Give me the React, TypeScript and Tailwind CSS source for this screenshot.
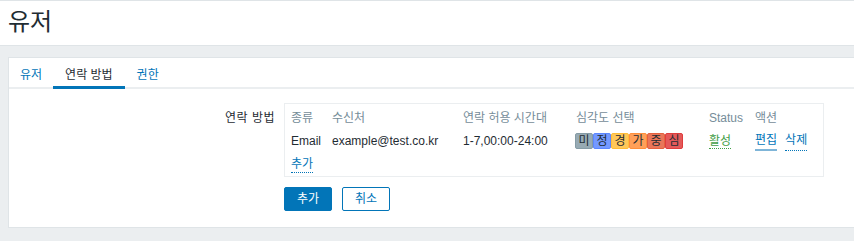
const font = { fontFamily: '"Liberation Sans", Arial, "Noto Sans CJK KR", sans-serif' };

const severities = [
  { label: "미", cls: "bg-[#97aab3] border-[#859ba5]" },
  { label: "정", cls: "bg-[#7499ff] border-[#5b87ff]" },
  { label: "경", cls: "bg-[#ffc859] border-[#ffbd38]" },
  { label: "가", cls: "bg-[#ffa059] border-[#ff8f3b]" },
  { label: "중", cls: "bg-[#e97659] border-[#e5603e]" },
  { label: "심", cls: "bg-[#e45959] border-[#df3d3d]" },
];

const App = () => {
  return (
    <div style={font} className="w-[854px] h-[241px] bg-[#ebeef0] text-[12px] text-[#1f2c33] overflow-hidden">
      <div className="h-[46px] bg-white border-t border-b border-[#dfe4e7] flex items-center pl-[8px]">
        <h1 className="text-[24px] leading-none font-normal text-[#1f2c33] -mt-[2px]">유저</h1>
      </div>

      <div className="mt-[11px] ml-[8px] w-[900px] h-[171px] bg-white border border-[#dfe4e7]">
        <ul className="flex h-[31px] border-b-2 border-[#ebeef0]">
          <li className="px-[11px] pt-[8px] text-[#0275b8]">유저</li>
          <li className="px-[12px] pt-[8px] text-[#1f2c33] border-b-[3px] border-[#0275b8] h-[31px]">연락 방법</li>
          <li className="px-[12px] pt-[8px] text-[#0275b8]">권한</li>
        </ul>

        <div className="flex pt-[14px]">
          <div className="w-[266px] text-right pt-[6px] tracking-[0.5px]">연락 방법</div>
          <div className="ml-[9px]">
            <div className="w-[540px] h-[74px] border border-[#ebeef0] px-[6px] pt-[3px]">
              <div className="flex h-[21px] items-center text-[#768d99]">
                <span className="w-[41px]">종류</span>
                <span className="w-[131px]">수신처</span>
                <span className="w-[113px]">연락 허용 시간대</span>
                <span className="w-[133px]">심각도 선택</span>
                <span className="w-[46px]">Status</span>
                <span>액션</span>
              </div>
              <div className="flex h-[25px] items-center">
                <span className="w-[41px]">Email</span>
                <span className="w-[131px]">example@test.co.kr</span>
                <span className="w-[113px]">1-7,00:00-24:00</span>
                <span className="w-[133px] flex -ml-[1px]">
                  {severities.map((s) => (
                    <span
                      key={s.label}
                      className={`w-[18px] h-[16px] border ${s.cls} rounded-[2px] flex items-center justify-center text-[12px] leading-none text-[#1f2c33]`}
                    >
                      {s.label}
                    </span>
                  ))}
                </span>
                <span className="w-[46px] pl-[1px]">
                  <span className="text-[#429e47] border-b border-dotted border-[#429e47]">활성</span>
                </span>
                <span className="flex gap-[8px] pl-[1px]">
                  <span className="text-[#0275b8] border-b-2 border-[#7fb5d8]">편집</span>
                  <span className="text-[#0275b8] border-b border-dotted border-[#0275b8]">삭제</span>
                </span>
              </div>
              <div className="flex h-[18px] mt-[3px] items-center">
                <span className="text-[#0275b8] border-b border-dotted border-[#0275b8] leading-[15px]">추가</span>
              </div>
            </div>
            <div className="flex gap-[10px] mt-[10px]">
              <button className="w-[48px] h-[24px] bg-[#0275b8] border border-[#0275b8] rounded-[2px] text-white">추가</button>
              <button className="w-[48px] h-[24px] bg-white border border-[#0275b8] rounded-[2px] text-[#0275b8]">취소</button>
            </div>
          </div>
        </div>
      </div>
    </div>
  );
};

export default App;
